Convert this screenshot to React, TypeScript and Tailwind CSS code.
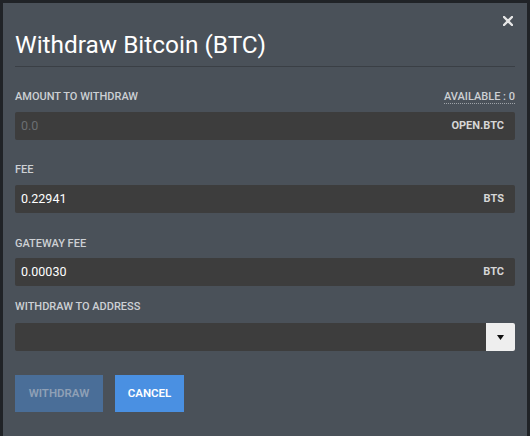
import { ReactNode } from 'react'

function FieldLabel({ children, right, className = '' }: { children: ReactNode; right?: ReactNode; className?: string }) {
  return (
    <div className={`flex h-4 items-center justify-between text-[11px] font-medium uppercase leading-4 text-[#cdd0d4] ${className}`}>
      <span>{children}</span>
      {right}
    </div>
  )
}

function AmountInput({ value, unit, placeholder }: { value?: string; unit: string; placeholder?: string }) {
  return (
    <div className="flex h-7 items-center justify-between rounded-[2px] bg-[#3d3d3d] pl-[6px] pr-[11px]">
      {value ? (
        <span className="text-[12.5px] text-white">{value}</span>
      ) : (
        <span className="text-[12.5px] text-[#6b6e72]">{placeholder}</span>
      )}
      <span className="text-[11px] font-bold text-[#d6d6d6]">{unit}</span>
    </div>
  )
}

export default function App() {
  return (
    <div className="h-[436px] w-[530px] overflow-hidden bg-[#202327] pl-[3px] pt-[3px] font-['Roboto',sans-serif]">
      <div className="h-[440px] w-[524px] bg-[#4a5159] px-3 pt-[27px]">
        <div className="relative">
          <h2 className="text-[24.4px] leading-[30px] text-white">Withdraw Bitcoin (BTC)</h2>
          <button className="absolute -top-[14px] right-[2px] text-[#e6e6e6]">
            <svg width="10" height="10" viewBox="0 0 10 10">
              <path d="M1 1 L9 9 M9 1 L1 9" stroke="currentColor" strokeWidth="2.4" strokeLinecap="round" />
            </svg>
          </button>
        </div>
        <div className="mt-[6px] border-t border-[#3a3f45]" />

        <FieldLabel
          className="mt-[22px]"
          right={
            <span className="border-b border-dotted border-[#9ea3a8] leading-[13px] text-[#cdd0d4]">AVAILABLE : 0</span>
          }
        >
          Amount to withdraw
        </FieldLabel>
        <div className="mt-[7px]">
          <AmountInput placeholder="0.0" unit="OPEN.BTC" />
        </div>

        <FieldLabel className="mt-[22px]">Fee</FieldLabel>
        <div className="mt-[7px]">
          <AmountInput value="0.22941" unit="BTS" />
        </div>

        <FieldLabel className="mt-[23px]">Gateway fee</FieldLabel>
        <div className="mt-[6px]">
          <AmountInput value="0.00030" unit="BTC" />
        </div>

        <FieldLabel className="mt-[13px]">Withdraw to address</FieldLabel>
        <div className="mt-[8px] flex h-7 overflow-hidden rounded-[2px] bg-[#3d3d3d]">
          <div className="flex-1" />
          <div className="flex w-[29px] items-center justify-center bg-[#eeeeee]">
            <svg width="7" height="5" viewBox="0 0 7 5">
              <path d="M0 0 H7 L3.5 5 Z" fill="#111" />
            </svg>
          </div>
        </div>

        <div className="mt-6 flex gap-3">
          <button className="h-[37px] w-[88px] bg-[#4a6e98] text-[11.5px] font-semibold uppercase text-[#8fa0b6]">
            Withdraw
          </button>
          <button className="h-[37px] w-[69px] bg-[#4a90e2] text-[11.5px] font-semibold uppercase text-white">
            Cancel
          </button>
        </div>
      </div>
    </div>
  )
}
